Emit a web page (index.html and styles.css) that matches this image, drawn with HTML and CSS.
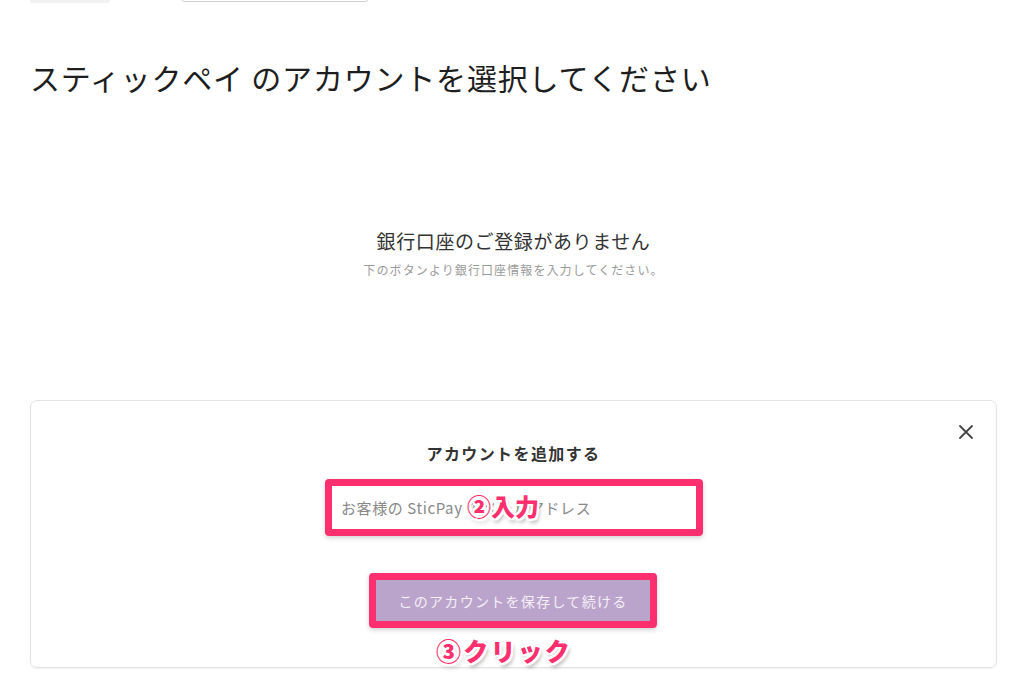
FILE: index.html
```html
<!DOCTYPE html>
<html lang="ja">
<head>
<meta charset="utf-8">
<title>スティックペイ</title>
<link rel="stylesheet" href="styles.css">
</head>
<body>
<div class="page">
  <div class="topstrip">
    <div class="tab"></div>
    <div class="field"></div>
  </div>
  <h1 class="title">スティックペイ のアカウントを選択してください</h1>
  <div class="empty">
    <p class="empty-title">銀行口座のご登録がありません</p>
    <p class="empty-sub">下のボタンより銀行口座情報を入力してください。</p>
  </div>
  <div class="card">
    <button class="close" aria-label="close">
      <svg width="16" height="16" viewBox="0 0 16 16"><path d="M2 2L14 14M14 2L2 14" stroke="#444" stroke-width="1.8" stroke-linecap="round"/></svg>
    </button>
    <h2 class="card-title">アカウントを追加する</h2>
    <div class="hl hl-input">
      <input class="input" type="text" placeholder="お客様の SticPay のメールアドレス">
      <span class="note note-input">②入力</span>
    </div>
    <div class="hl hl-btn">
      <button class="save">このアカウントを保存して続ける</button>
      <span class="note note-click">③クリック</span>
    </div>
  </div>
</div>
</body>
</html>
```

FILE: styles.css
```css
* { box-sizing: border-box; }
html, body { margin: 0; padding: 0; background: #fff; }
body {
  font-family: "Noto Sans CJK JP", "Noto Sans", sans-serif;
  color: #222;
}
.page {
  width: 1024px;
  height: 690px;
  overflow: hidden;
  padding: 0 27px 0 30px;
}
.topstrip {
  height: 3px;
  display: flex;
  align-items: flex-end;
  gap: 70px;
  overflow: hidden;
}
.tab {
  width: 80px;
  height: 20px;
  background: #f1f1f1;
  border-radius: 0 0 3px 3px;
  flex: none;
}
.field {
  width: 190px;
  height: 20px;
  border: 1px solid #cfcfcf;
  border-radius: 0 0 5px 5px;
  flex: none;
  margin-bottom: 1px;
}
.title {
  margin: 56px 0 0;
  font-size: 30px;
  line-height: 36px;
  font-weight: 400;
  letter-spacing: 0.8px;
  color: #1e1e1e;
}
.empty {
  margin-top: 133px;
  text-align: center;
}
.empty-title {
  margin: 0;
  font-size: 19px;
  line-height: 26px;
  letter-spacing: 0.6px;
  color: #333;
}
.empty-sub {
  margin: 8px 0 0;
  font-size: 12px;
  line-height: 16px;
  letter-spacing: 1.1px;
  color: #9a9a9a;
}
.card {
  position: relative;
  margin-top: 122px;
  height: 268px;
  border: 1px solid #e3e3e3;
  border-radius: 7px;
  box-shadow: 0 1px 2px rgba(0,0,0,0.06);
  display: flex;
  flex-direction: column;
  align-items: center;
  padding-top: 40px;
}
.close {
  position: absolute;
  top: 22px;
  right: 21px;
  width: 18px;
  height: 18px;
  padding: 0;
  border: 0;
  background: none;
  display: flex;
  align-items: center;
  justify-content: center;
}
.card-title {
  margin: 0;
  font-size: 16px;
  line-height: 24px;
  font-weight: 600;
  letter-spacing: 1.4px;
  color: #333;
}
.hl {
  position: relative;
  border: 7px solid #fe2f6e;
  border-radius: 4px;
  box-shadow: 0 2px 5px rgba(0,0,0,0.18);
}
.hl-input {
  margin-top: 14px;
  margin-left: 1px;
}
.input {
  display: block;
  width: 364px;
  height: 43px;
  border: 0;
  padding: 0 9px;
  font-family: "Noto Sans CJK JP", "Noto Sans", sans-serif;
  font-size: 15px;
  letter-spacing: 0.6px;
  color: #333;
  background: #fff;
  outline: none;
}
.input::placeholder { color: #8a8a8a; }
.hl-btn {
  margin-top: 37px;
  margin-right: 1px;
}
.save {
  display: block;
  width: 274px;
  height: 41px;
  border: 0;
  margin: 0;
  background: #bba4cb;
  color: #f4eff7;
  font-family: "Noto Sans CJK JP", "Noto Sans", sans-serif;
  font-size: 14px;
  letter-spacing: 1.3px;
}
.note {
  position: absolute;
  font-size: 24px;
  line-height: 30px;
  font-weight: 900;
  color: #fe2f6e;
  white-space: nowrap;
  text-shadow:
    -2px -2px 0 #fff, 2px -2px 0 #fff, -2px 2px 0 #fff, 2px 2px 0 #fff,
    0 -2px 0 #fff, 0 2px 0 #fff, -2px 0 0 #fff, 2px 0 0 #fff,
    2px 4px 4px rgba(0,0,0,0.35);
}
.note-input {
  left: 135px;
  top: 5px;
}
.note-click {
  left: 60px;
  top: 55px;
  font-size: 25px;
  letter-spacing: 2.2px;
}
```
